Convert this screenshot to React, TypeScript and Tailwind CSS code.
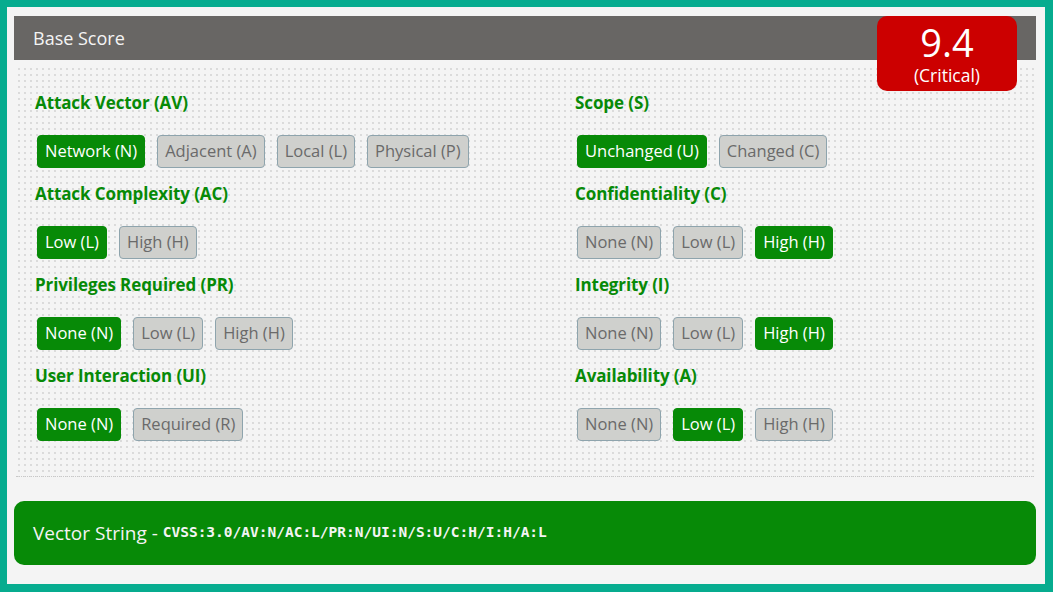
import React from "react";

type Metric = {
  title: string;
  options: string[];
  selected: number;
};

const leftMetrics: Metric[] = [
  { title: "Attack Vector (AV)", options: ["Network (N)", "Adjacent (A)", "Local (L)", "Physical (P)"], selected: 0 },
  { title: "Attack Complexity (AC)", options: ["Low (L)", "High (H)"], selected: 0 },
  { title: "Privileges Required (PR)", options: ["None (N)", "Low (L)", "High (H)"], selected: 0 },
  { title: "User Interaction (UI)", options: ["None (N)", "Required (R)"], selected: 0 },
];

const rightMetrics: Metric[] = [
  { title: "Scope (S)", options: ["Unchanged (U)", "Changed (C)"], selected: 0 },
  { title: "Confidentiality (C)", options: ["None (N)", "Low (L)", "High (H)"], selected: 2 },
  { title: "Integrity (I)", options: ["None (N)", "Low (L)", "High (H)"], selected: 2 },
  { title: "Availability (A)", options: ["None (N)", "Low (L)", "High (H)"], selected: 1 },
];

function MetricGroup({ metric }: { metric: Metric }) {
  return (
    <div className="flex flex-col pb-[14px]">
      <h3 className="text-[17px] leading-6 font-bold text-[#078a07] tracking-[-0.1px]">
        {metric.title}
      </h3>
      <div className="flex gap-[12px] mt-5 pl-[2px]">
        {metric.options.map((opt, i) =>
          i === metric.selected ? (
            <span
              key={opt}
              className="h-[33px] px-[7px] flex items-center rounded-[4px] border border-[#078a07] bg-[#078a07] text-white text-[16.5px]"
            >
              {opt}
            </span>
          ) : (
            <span
              key={opt}
              className="h-[33px] px-[7px] flex items-center rounded-[4px] border border-[#8ea4ad] bg-[#cfd0cd] text-[#6a6a6a] text-[16.5px]"
            >
              {opt}
            </span>
          )
        )}
      </div>
    </div>
  );
}

export default function App() {
  return (
    <div
      className="w-[1053px] h-[592px] bg-[#06ac8f] p-[7px] pr-[8px] pb-[8px]"
      style={{ fontFamily: '"Open Sans", "Noto Sans", sans-serif' }}
    >
      <div className="relative h-full bg-[#f4f4f4] pt-[9px] pl-[7px] pr-[9px] flex flex-col">
        <div className="h-[44px] bg-[#686664] flex items-center px-[19px]">
          <span className="text-[18px] text-[#f4f4f4]">Base Score</span>
        </div>

        <div className="absolute top-[9px] right-[28px] w-[140px] h-[75px] rounded-[10px] bg-[#cc0000] text-white flex flex-col items-center pt-[6px]">
          <span className="text-[38px] leading-[40px]">9.4</span>
          <span className="text-[17.5px] leading-[20px] mt-[3px]">(Critical)</span>
        </div>

        <div className="mx-[2px] mt-[6px] pt-[25px] pb-[21px] pl-[19px] border-b border-dotted border-[#c8c8c8] bg-[radial-gradient(#dadada_0.7px,transparent_1px)] bg-[length:6px_6px] grid grid-cols-[540px_1fr]">
          <div className="flex flex-col">
            {leftMetrics.map((m) => (
              <MetricGroup key={m.title} metric={m} />
            ))}
          </div>
          <div className="flex flex-col">
            {rightMetrics.map((m) => (
              <MetricGroup key={m.title} metric={m} />
            ))}
          </div>
        </div>

        <div className="mt-[24px] h-[64px] rounded-[10px] bg-[#078a07] flex items-center px-[19px] text-[#f4f4f4]">
          <span className="text-[19px]">Vector String -&nbsp;</span>
          <span
            className="text-[14.5px] font-bold"
            style={{ fontFamily: '"DejaVu Sans Mono", monospace' }}
          >
            CVSS:3.0/AV:N/AC:L/PR:N/UI:N/S:U/C:H/I:H/A:L
          </span>
        </div>
      </div>
    </div>
  );
}
